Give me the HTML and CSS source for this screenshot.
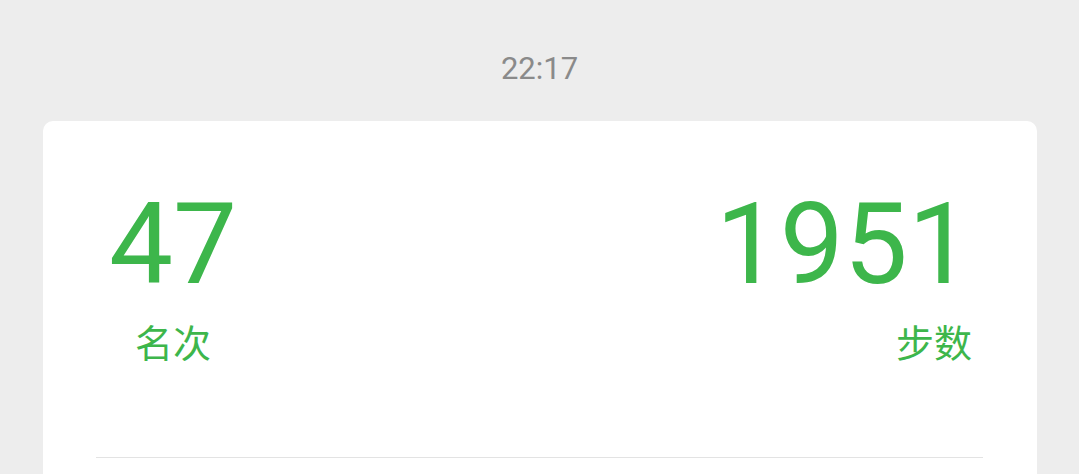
FILE: index.html
```html
<!DOCTYPE html>
<html lang="zh">
<head>
    <meta charset="UTF-8">
    <meta name="viewport" content="width=device-width, initial-scale=1.0">
    <title>步数排行</title>
    <link rel="stylesheet" href="styles.css">
</head>
<body>

    <div class="time">22:17</div>

    <main class="card">
        <section class="stats">
            <div class="stat stat-left">
                <div class="stat-value">47</div>
                <div class="stat-label">名次</div>
            </div>
            <div class="stat stat-right">
                <div class="stat-value">1951</div>
                <div class="stat-label">步数</div>
            </div>
        </section>
        <div class="divider"></div>
    </main>

</body>
</html>
```

FILE: styles.css
```css
body {
    margin: 0;
    background-color: #ededed;
    font-family: Roboto, "Noto Sans CJK SC", sans-serif;
}

/* Time */
.time {
    padding-top: 51px;
    text-align: center;
    font-size: 31px;
    line-height: 36px;
    color: #8a8a8a;
}

/* Card */
.card {
    margin: 34px 42px 0 43px;
    height: 400px;
    background: #fff;
    border-radius: 10px;
}

.stats {
    display: flex;
    justify-content: space-between;
    padding: 63px 65px 97px 66px;
}

.stat {
    display: flex;
    flex-direction: column;
}

.stat-left {
    align-items: center;
}

.stat-right {
    align-items: flex-end;
}

.stat-value {
    font-size: 114px;
    line-height: 120px;
    color: #3db64b;
}

.stat-label {
    margin-top: 18px;
    font-family: "Noto Sans CJK SC", sans-serif;
    font-size: 38px;
    line-height: 38px;
    color: #3db64b;
}

.divider {
    margin: 0 54px 0 53px;
    border-top: 1px solid #e3e3e3;
}
```
